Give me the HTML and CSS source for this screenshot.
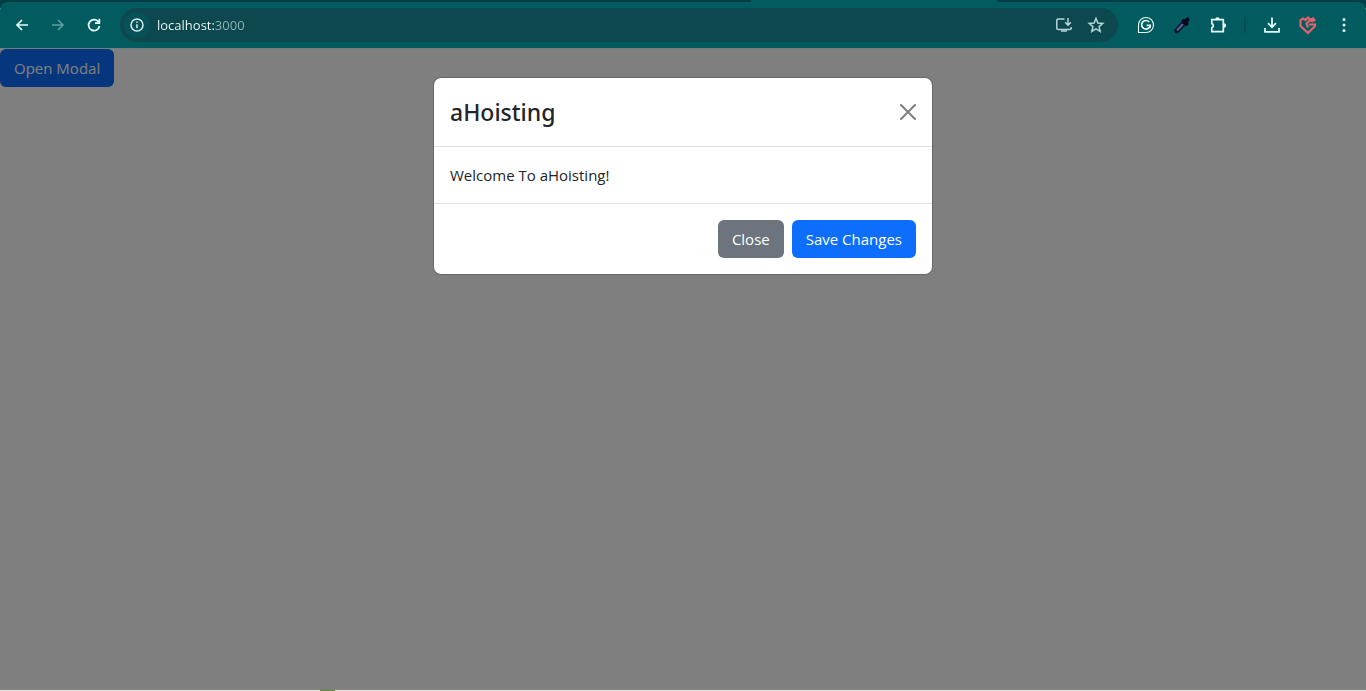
FILE: index.html
```html
<!DOCTYPE html>
<html lang="en">
<head>
    <meta charset="UTF-8">
    <meta name="viewport" content="width=device-width, initial-scale=1.0">
    <title>aHoisting</title>
    <link rel="stylesheet" href="styles.css">
</head>
<body>

<div class="tab-strip"><div class="active-tab"></div></div>

<header class="toolbar">
    <button class="icon-button" aria-label="Back">
        <svg width="16" height="16" viewBox="0 0 16 16"><path d="M14 8H3M8 3L3 8l5 5"/></svg>
    </button>
    <button class="icon-button faded" aria-label="Forward">
        <svg width="16" height="16" viewBox="0 0 16 16"><path d="M2 8h11M8 3l5 5-5 5"/></svg>
    </button>
    <button class="icon-button" aria-label="Reload">
        <svg width="16" height="16" viewBox="0 0 16 16"><path d="M12.600 5A5.500 5.500 0 1 0 13.500 9M13.400 1.800v4.400H9"/></svg>
    </button>

    <div class="address-bar">
        <button class="site-info" aria-label="Site information">
            <svg width="14" height="14" viewBox="0 0 14 14"><circle cx="7" cy="7" r="6"/><path d="M7 6.300v4M7 3.600v1.300"/></svg>
        </button>
        <input type="text" class="url" aria-label="Address" value="localhost:3000">
        <button class="icon-button soft" aria-label="Install">
            <svg width="18" height="18" viewBox="0 0 18 18"><path d="M9.500 3H3q-1.200 0-1.200 1.200v8.100q0 1.200 1.200 1.200h12q1.200 0 1.200-1.200V11M13 2v7M10.200 6.400L13 9.200l2.800-2.800"/><path d="M6 15h6"/></svg>
        </button>
        <button class="icon-button soft" aria-label="Bookmark">
            <svg width="18" height="18" viewBox="0 0 18 18"><path d="M9 2.500l1.900 4.500 4.900.4-3.700 3.200 1.100 4.800L9 12.900l-4.200 2.500 1.100-4.800-3.700-3.200 4.900-.4z"/></svg>
        </button>
    </div>

    <div class="extensions">
        <button class="icon-button" aria-label="Grammar">
            <svg width="18" height="18" viewBox="0 0 18 18"><path class="thin" d="M1.500 16.500V9A7.500 7.500 0 1 1 9 16.500z"/><path d="M12.200 6A4.300 4.300 0 1 0 13.200 9.400H9.600M13.200 9.400l-.4 2.600"/></svg>
        </button>
        <button class="icon-button" aria-label="Colour picker">
            <svg width="18" height="18" viewBox="0 0 18 18"><path class="picker-edge" d="M3.800 14.800L11 7"/><path class="picker-glass" d="M4 14.500L10 8"/><path class="picker-head" d="M10.500 5l3 2.800M12 6l2.500-2.500"/></svg>
        </button>
        <button class="icon-button" aria-label="Extensions">
            <svg width="18" height="18" viewBox="0 0 18 18"><path d="M2.800 3.700H14.300V15.700H2.800V11.800a2.200 2.200 0 0 0 0-4.200z"/><path class="filled" d="M6.200 3.500a2.300 2.300 0 0 1 4.600 0zM14.800 7.300a2.300 2.300 0 0 1 0 4.600z"/></svg>
        </button>
        <span class="divider"></span>
        <button class="icon-button" aria-label="Downloads">
            <svg width="18" height="18" viewBox="0 0 18 18"><path d="M9 1.500v9.500M5 7.200L9 11.200l4-4M2 12v3.800h14V12"/></svg>
        </button>
        <button class="icon-button red" aria-label="Shield">
            <svg width="20" height="20" viewBox="0 0 20 20"><path d="M17 6L15 3.500 12.500 5 10 2.500 7.500 5 5 3.500 2.500 5v6L10 18l7-7V9.500H11M15.500 6.500L12 5.500 8.500 8.500 10 12.500"/></svg>
        </button>
        <button class="icon-button" aria-label="Menu">
            <svg width="18" height="18" viewBox="0 0 18 18"><g class="filled"><circle cx="9" cy="3.500" r="1.500"/><circle cx="9" cy="9" r="1.500"/><circle cx="9" cy="14.500" r="1.500"/></g></svg>
        </button>
    </div>
</header>

<main class="page">
    <button class="btn btn-primary">Open Modal</button>

    <div class="modal-backdrop">
        <div class="modal" role="dialog" aria-labelledby="modalTitle">
            <div class="modal-header">
                <h1 id="modalTitle" class="modal-title">aHoisting</h1>
                <button class="btn-close" aria-label="Close">
                    <svg width="16" height="16" viewBox="0 0 16 16"><path d="M1 1l14 14M15 1L1 15"/></svg>
                </button>
            </div>
            <div class="modal-body">Welcome To aHoisting!</div>
            <div class="modal-footer">
                <button class="btn btn-secondary">Close</button>
                <button class="btn btn-primary">Save Changes</button>
            </div>
        </div>
    </div>
</main>

<div class="taskbar"><span class="taskbar-icon"></span></div>

</body>
</html>
```
FILE: styles.css
```css
* {
    box-sizing: border-box;
}
body {
    margin: 0;
    min-height: 100vh;
    display: flex;
    flex-direction: column;
    font-family: "Segoe UI", "Open Sans", "Noto Sans", sans-serif;
    font-size: 15px;
    line-height: 24px;
    color: #212529;
    background-color: #fff;
}
button {
    font: inherit;
    border: none;
    cursor: pointer;
}

/* browser bar */
.tab-strip {
    display: flex;
    justify-content: flex-end;
    height: 8px;
    padding-right: 27%;
    background-color: #043c48;
}
.active-tab {
    width: 25%;
    max-width: 246px;
    background-color: #025c5f;
}
.toolbar {
    display: flex;
    align-items: center;
    height: 47px;
    margin-top: -6px;
    padding: 0 13px 0 4px;
    border-bottom: 1px solid #6f8283;
    border-radius: 8px 8px 0 0;
    background-color: #025c5f;
}
.icon-button {
    display: flex;
    align-items: center;
    justify-content: center;
    flex: none;
    width: 36px;
    height: 34px;
    padding: 0;
    color: #e6fdfb;
    background: none;
}
.icon-button svg,
.site-info svg {
    fill: none;
    stroke: currentColor;
    stroke-width: 1.7;
}
.icon-button.faded {
    color: #5b9f9f;
}
.icon-button.soft {
    width: 32px;
    color: #b5d5d9;
}
.icon-button.soft svg {
    stroke-width: 1.5;
}
.icon-button.red {
    color: #e3626c;
}
.icon-button.red svg {
    stroke-width: 2.2;
}
.icon-button .thin {
    stroke-width: 1.1;
}
.icon-button .filled {
    fill: currentColor;
    stroke: none;
}
.picker-edge {
    stroke: #06122c;
    stroke-width: 5;
    stroke-linecap: round;
}
.picker-glass {
    stroke: #56659a;
    stroke-width: 2;
}
.picker-head {
    stroke: #06081c;
    stroke-width: 4;
    stroke-linecap: round;
}
.address-bar {
    display: flex;
    align-items: center;
    flex: 1;
    height: 34px;
    margin-left: 8px;
    padding: 0 6px 0 4px;
    border-radius: 17px;
    background-color: #0e484f;
}
.site-info {
    display: flex;
    align-items: center;
    justify-content: center;
    width: 26px;
    height: 26px;
    padding: 0;
    border-radius: 50%;
    color: #d5eeee;
    background-color: #075259;
}
.site-info svg {
    stroke-width: 1.5;
}
.url {
    flex: 1;
    min-width: 0;
    padding: 0 0 0 7px;
    border: none;
    outline: none;
    font-family: inherit;
    font-size: 13px;
    color: transparent;
    /* host is bright, port is dimmed */
    background: linear-gradient(to right, #f2ffff 64px, #8fb5b9 64px);
    -webkit-background-clip: text;
    background-clip: text;
}
.extensions {
    display: flex;
    align-items: center;
    margin-left: 10px;
}
.divider {
    width: 2px;
    height: 16px;
    margin: 0 8px;
    background-color: #044b52;
}
.extensions .icon-button:last-child {
    margin-right: -9px;
}

/* page */
.page {
    position: relative;
    flex: 1;
    background-color: #fff;
}
.btn {
    display: inline-block;
    padding: 7px 14px;
    border-radius: 6px;
    color: #fff;
}
.btn-primary {
    background-color: #0d6efd;
}
.btn-secondary {
    background-color: #6c757d;
}
.modal-backdrop {
    position: absolute;
    inset: 0;
    padding: 28px 8px;
    background-color: rgba(0, 0, 0, 0.5);
}
.modal {
    max-width: 500px;
    margin: 0 auto;
    border: 1px solid rgba(0, 0, 0, 0.175);
    border-radius: 8px;
    background-color: #fff;
    background-clip: padding-box;
}
.modal-header {
    display: flex;
    align-items: center;
    justify-content: space-between;
    padding: 16px;
    border-bottom: 1px solid #dee2e6;
}
.modal-title {
    margin: 0;
    font-family: "Segoe UI", "Noto Sans", sans-serif;
    font-size: 23px;
    font-weight: 500;
    line-height: 36px;
}
.btn-close {
    display: flex;
    padding: 0;
    color: #7f7f7f;
    background: none;
}
.btn-close svg {
    fill: none;
    stroke: currentColor;
    stroke-width: 2;
    stroke-linecap: round;
}
.modal-body {
    padding: 16px;
}
.modal-footer {
    display: flex;
    justify-content: flex-end;
    gap: 8px;
    padding: 16px;
    border-top: 1px solid #dee2e6;
}

/* top edge of the taskbar */
.taskbar {
    display: flex;
    height: 1px;
    padding-left: 320px;
    background-color: #eee5e3;
}
.taskbar-icon {
    width: 15px;
    background-color: #5c8f3c;
}
```
